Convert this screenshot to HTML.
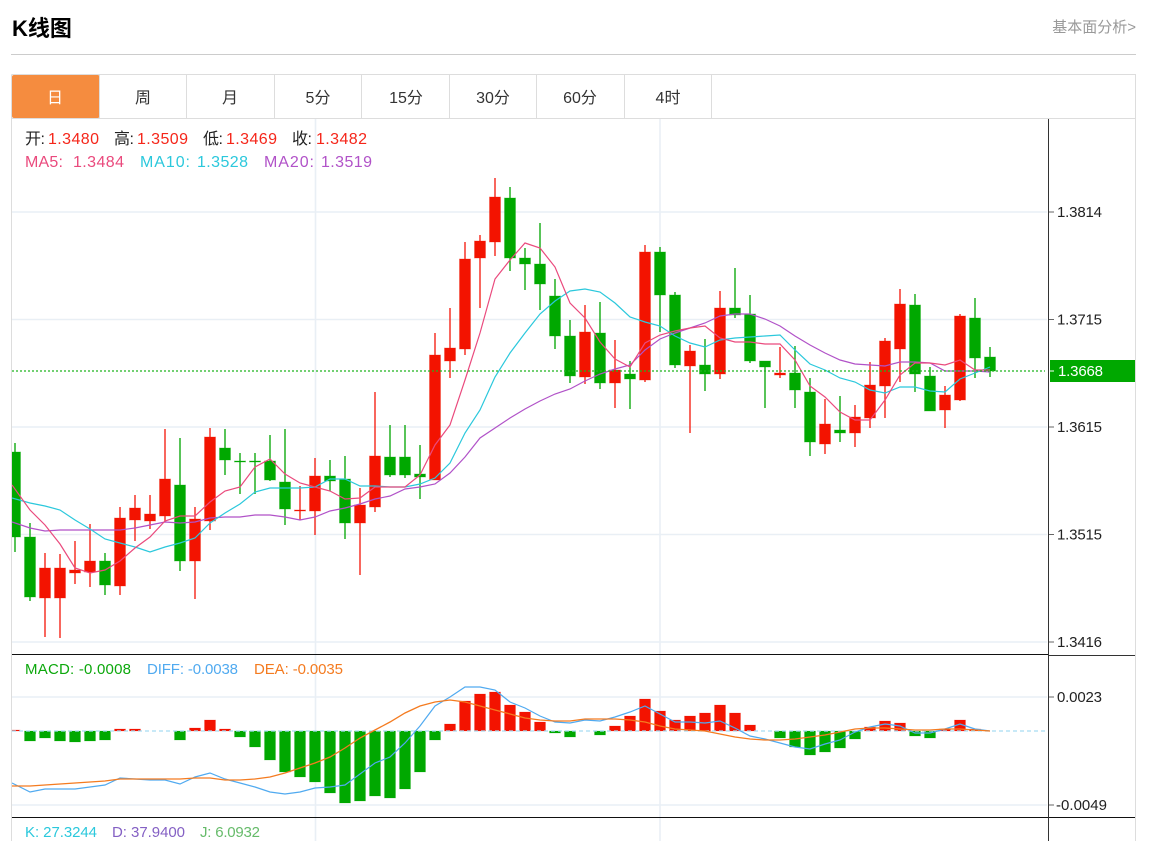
<!DOCTYPE html>
<html lang="zh">
<head>
<meta charset="utf-8">
<title>K线图</title>
<style>
html,body{margin:0;padding:0;background:#fff;width:1163px;height:841px;overflow:hidden}
svg{display:block;font-family:"Liberation Sans","Noto Sans CJK SC",sans-serif}
</style>
</head>
<body>
<svg width="1163" height="841" viewBox="0 0 1163 841" xmlns="http://www.w3.org/2000/svg">
<defs><clipPath id="c"><rect x="12" y="119" width="1037" height="722"/></clipPath></defs>
<text x="12" y="36" font-size="22" font-weight="bold" fill="#000">K线图</text>
<text x="1136" y="32" font-size="15" fill="#999" text-anchor="end">基本面分析&gt;</text>
<path d="M11 54.500H1136" stroke="#ccc" fill="none"/>
<path d="M11.500 74.500H1135.500V841M11.500 74.500V841M11 118.500H1136" stroke="#ddd" fill="none"/>
<rect x="12" y="75" width="87.500" height="43" rx="2" fill="#f58c3f"/>
<path d="M99.500 75V118M186.500 75V118M274.500 75V118M361.500 75V118M449.500 75V118M536.500 75V118M624.500 75V118M711.500 75V118" stroke="#ddd" fill="none"/>
<g font-size="16" fill="#333" text-anchor="middle">
<text x="55" y="103" fill="#fff">日</text>
<text x="143" y="103">周</text>
<text x="230" y="103">月</text>
<text x="318" y="103">5分</text>
<text x="406" y="103">15分</text>
<text x="493" y="103">30分</text>
<text x="580" y="103">60分</text>
<text x="668" y="103">4时</text>
</g>
<!-- grid -->
<g clip-path="url(#c)">
<path d="M12 212H1047M12 319.500H1047M12 427H1047M12 534.500H1047M12 642H1047M12 697H1047M12 805H1047" stroke="#e9eff5" stroke-width="1.600" fill="none"/>
<path d="M315.500 119V841M660 119V841" stroke="#e9eff5" stroke-width="1.600" fill="none"/>
<!-- green candles -->
<g fill="none" stroke="#12ab12" stroke-width="1.400">
<path d="M15 443V552M30 523V601M105 553V595M180 438V571M225 429V475M240 453V494M255 453V494M270 435V481M285 429V525M330 460V491M345 456V539M390 425V477M405 425V478M420 445V499M510 187V271M525 248V290M540 223V310M555 279V349M570 320V383M600 302V389M630 361V409M660 247V332M675 292V368M705 339V391M735 268V318M750 295V363M765 361V408M795 346V408M810 378V456M840 396V442M915 294V392M930 367V411M975 298V378M990 347V377"/>
</g>
<g fill="#00a800" stroke="#00a800" stroke-opacity=".3" stroke-width="1">
<path d="M12 452h8.500v85h-8.500zM24.500 537h11v60h-11zM99.500 561h11v24h-11zM174.500 485h11v76h-11zM219.500 448h11v12h-11zM234.500 461h11v1h-11zM249.500 461h11v1h-11zM264.500 461h11v19h-11zM279.500 482h11v27h-11zM324.500 476h11v5h-11zM339.500 479h11v44h-11zM384.500 457h11v18h-11zM399.500 457h11v18h-11zM414.500 474h11v3h-11zM504.500 198h11v60h-11zM519.500 258h11v6h-11zM534.500 264h11v20h-11zM549.500 296h11v40h-11zM564.500 336h11v40h-11zM594.500 333h11v50h-11zM624.500 374h11v5h-11zM654.500 252h11v43h-11zM669.500 295h11v70h-11zM699.500 365h11v9h-11zM729.500 308h11v7h-11zM744.500 314h11v47h-11zM759.500 361h11v6h-11zM789.500 373h11v17h-11zM804.500 392h11v50h-11zM834.500 430h11v3h-11zM909.500 305h11v69h-11zM924.500 376h11v35h-11zM969.500 318h11v40h-11zM984.500 357h11v14h-11z"/>
</g>
<!-- red candles -->
<g fill="none" stroke="#f5261a" stroke-width="1.400">
<path d="M45 553V637M60 554V638M75 541V584M90 524V587M120 507V595M135 495V541M150 495V529M165 429V522M195 507V599M210 428V530M300 486V520M315 458V535M360 488V575M375 392V512M435 333V480M450 308V378M465 242V355M480 235V308M495 178V256M585 305V384M615 340V408M645 245V382M690 345V433M720 291V379M780 347V378M825 399V454M855 405V447M870 362V428M885 338V418M900 289V382M945 386V428M960 314V401"/>
</g>
<g fill="#f31300" stroke="#f31300" stroke-opacity=".3" stroke-width="1">
<path d="M39.500 568h11v30h-11zM54.500 568h11v30h-11zM69.500 570h11v3h-11zM84.500 561h11v11h-11zM114.500 518h11v68h-11zM129.500 508h11v12h-11zM144.500 514h11v7h-11zM159.500 479h11v37h-11zM189.500 519h11v42h-11zM204.500 437h11v84h-11zM294.500 510h11v1h-11zM309.500 476h11v35h-11zM354.500 505h11v18h-11zM369.500 456h11v51h-11zM429.500 355h11v125h-11zM444.500 348h11v13h-11zM459.500 259h11v90h-11zM474.500 241h11v17h-11zM489.500 197h11v45h-11zM579.500 332h11v45h-11zM609.500 370h11v13h-11zM639.500 252h11v128h-11zM684.500 351h11v15h-11zM714.500 308h11v66h-11zM774.500 373h11v2h-11zM819.500 424h11v20h-11zM849.500 417h11v16h-11zM864.500 385h11v33h-11zM879.500 341h11v45h-11zM894.500 304h11v45h-11zM939.500 395h11v15h-11zM954.500 316h11v84h-11z"/>
</g>
<!-- MA lines -->
<path fill="none" stroke="#b152c8" stroke-width="1.200" d="M12 522L30 528 45 531 60 530 75 530 90 530 105 530 120 530 135 528 150 525 165 522 180 523 195 522 210 518 225 517 240 517 255 515 270 515 285 517 300 520 315 517 330 511 345 508 360 504 375 499 390 496 405 489 420 487 435 484 450 473 465 457 480 438 495 428 510 418 525 409 540 401 555 394 570 389 585 381 600 374 615 369 630 365 645 350 660 339 675 333 690 328 705 323 720 316 735 314 750 314 765 319 780 326 795 336 810 345 825 353 840 360 855 364 870 365 885 366 900 362 915 362 930 363 945 371 960 371 975 371 990 372"/>
<path fill="none" stroke="#2bc8dc" stroke-width="1.200" d="M12 498L30 503 45 506 60 510 75 520 90 529 105 539 120 543 135 547 150 552 165 547 180 543 195 538 210 523 225 513 240 504 255 492 270 488 285 488 300 488 315 487 330 479 345 479 360 486 375 486 390 487 405 487 420 484 435 478 450 463 465 433 480 410 495 377 510 353 525 333 540 314 555 301 570 291 585 289 600 292 615 303 630 317 645 322 660 326 675 336 690 343 705 347 720 340 735 338 750 337 765 336 780 335 795 350 810 364 825 370 840 378 855 382 870 390 885 393 900 387 915 387 930 391 945 392 960 379 975 373 990 367"/>
<path fill="none" stroke="#ea4a7d" stroke-width="1.200" d="M12 485L30 510 45 525 60 544 75 568 90 573 105 570 120 561 135 548 150 537 165 521 180 516 195 516 210 502 225 491 240 487 255 467 270 459 285 474 300 483 315 487 330 491 345 499 360 498 375 487 390 487 405 487 420 475 435 445 450 425 465 380 480 333 495 279 510 260 525 243 540 248 555 267 570 303 585 318 600 342 615 359 630 367 645 343 660 335 675 331 690 328 705 326 720 338 735 342 750 342 765 344 780 344 795 360 810 386 825 397 840 412 855 420 870 420 885 400 900 375 915 363 930 363 945 365 960 360 975 370 990 370"/>
<path d="M12 371H1045" stroke="#1fb51f" stroke-width="1.300" stroke-dasharray="2 2" fill="none"/>
<!-- MACD bars -->
<g fill="#00a800" stroke="#00a800" stroke-opacity=".25" stroke-width=".8">
<path d="M24.500 731h11v10h-11zM39.500 731h11v7h-11zM54.500 731h11v10h-11zM69.500 731h11v11h-11zM84.500 731h11v10h-11zM99.500 731h11v9h-11zM174.500 731h11v9h-11zM234.500 731h11v6h-11zM249.500 731h11v16h-11zM264.500 731h11v29h-11zM279.500 731h11v41h-11zM294.500 731h11v46h-11zM309.500 731h11v51h-11zM324.500 731h11v62h-11zM339.500 731h11v72h-11zM354.500 731h11v70h-11zM369.500 731h11v65h-11zM384.500 731h11v67h-11zM399.500 731h11v58h-11zM414.500 731h11v41h-11zM429.500 731h11v9h-11zM549.500 731h11v2h-11zM564.500 731h11v6h-11zM594.500 731h11v4h-11zM774.500 731h11v7h-11zM789.500 731h11v16h-11zM804.500 731h11v24h-11zM819.500 731h11v21h-11zM834.500 731h11v17h-11zM849.500 731h11v8h-11zM909.500 731h11v5h-11zM924.500 731h11v7h-11z"/>
</g>
<g fill="#f31300" stroke="#f31300" stroke-opacity=".25" stroke-width=".8">
<path d="M12 730h8v1h-8zM114.500 729h11v2h-11zM129.500 729h11v2h-11zM189.500 728h11v3h-11zM204.500 720h11v11h-11zM219.500 729h11v2h-11zM444.500 724h11v7h-11zM459.500 701h11v30h-11zM474.500 694h11v37h-11zM489.500 692h11v39h-11zM504.500 705h11v26h-11zM519.500 712h11v19h-11zM534.500 722h11v9h-11zM609.500 726h11v5h-11zM624.500 716h11v15h-11zM639.500 699h11v32h-11zM654.500 711h11v20h-11zM669.500 720h11v11h-11zM684.500 716h11v15h-11zM699.500 713h11v18h-11zM714.500 705h11v26h-11zM729.500 713h11v18h-11zM744.500 725h11v6h-11zM864.500 727h11v4h-11zM879.500 721h11v10h-11zM894.500 723h11v8h-11zM939.500 729h11v2h-11zM954.500 720h11v11h-11zM969.500 729h11v2h-11z"/>
</g>
<path d="M12 731H1045" stroke="#a8dcf2" stroke-width="1.200" stroke-dasharray="4 3" fill="none"/>
<path fill="none" stroke="#50aaf0" stroke-width="1.200" d="M12 783L30 792 45 789 60 789 75 789 90 787 105 785 120 778 135 779 150 780 165 780 180 784 195 777 210 773 225 779 240 783 255 787 270 792 285 794 300 792 315 788 330 787 345 785 360 774 375 763 390 757 405 743 420 726 435 706 450 697 465 687 480 687 495 690 510 702 525 708 540 716 555 722 570 723 585 720 600 721 615 717 630 712 645 706 660 714 675 722 690 722 705 723 720 721 735 728 750 736 765 739 780 743 795 747 810 749 825 744 840 740 855 732 870 727 885 724 900 726 915 733 930 733 945 729 960 724 975 729 990 731"/>
<path fill="none" stroke="#f47b20" stroke-width="1.300" d="M12 786L30 786 45 785 60 784 75 783 90 782 105 781 120 779 135 779 150 779 165 779 180 779 195 778 210 778 225 780 240 780 255 779 270 777 285 773 300 768 315 763 330 757 345 748 360 738 375 730 390 722 405 713 420 706 435 702 450 700 465 702 480 706 495 710 510 714 525 718 540 720 555 721 570 721 585 719 600 719 615 719 630 720 645 722 660 726 675 729 690 730 705 731 720 734 735 737 750 739 765 740 780 740 795 739 810 737 825 735 840 732 855 729 870 728 885 728 900 729 915 730 930 730 945 729 960 729 975 730 990 731"/>
</g>
<!-- frame lines -->
<path d="M12 654.500H1048.500M12 817.500H1135" stroke="#111" stroke-width="1" fill="none"/>
<path d="M1048.500 119V841M1048 655.500H1135" stroke="#333" stroke-width="1" fill="none"/>
<path d="M1049 212H1054M1049 319.500H1054M1049 427H1054M1049 534.500H1054M1049 642H1054M1049 697H1054M1049 805H1054" stroke="#666" stroke-width="1" fill="none"/>
<!-- axis labels -->
<g font-size="15" fill="#222">
<text x="1057" y="217" textLength="45" lengthAdjust="spacing">1.3814</text>
<text x="1057" y="324.500" textLength="45" lengthAdjust="spacing">1.3715</text>
<text x="1057" y="432" textLength="45" lengthAdjust="spacing">1.3615</text>
<text x="1057" y="539.500" textLength="45" lengthAdjust="spacing">1.3515</text>
<text x="1057" y="647" textLength="45" lengthAdjust="spacing">1.3416</text>
<text x="1057" y="702" textLength="45" lengthAdjust="spacing">0.0023</text>
<text x="1056" y="810" textLength="51" lengthAdjust="spacing">-0.0049</text>
</g>
<rect x="1050" y="360" width="85" height="22" fill="#00a800"/>
<path d="M1050 371H1054" stroke="#fff" fill="none"/>
<text x="1058" y="376" font-size="15" fill="#fff" textLength="45" lengthAdjust="spacing">1.3668</text>
<!-- legends -->
<g font-size="16">
<text x="25" y="144" fill="#222" textLength="20" lengthAdjust="spacing">开:</text>
<text x="48" y="144" fill="#f5261a" textLength="51" lengthAdjust="spacing">1.3480</text>
<text x="114" y="144" fill="#222" textLength="20" lengthAdjust="spacing">高:</text>
<text x="137" y="144" fill="#f5261a" textLength="51" lengthAdjust="spacing">1.3509</text>
<text x="203" y="144" fill="#222" textLength="20" lengthAdjust="spacing">低:</text>
<text x="226" y="144" fill="#f5261a" textLength="51" lengthAdjust="spacing">1.3469</text>
<text x="292" y="144" fill="#222" textLength="20" lengthAdjust="spacing">收:</text>
<text x="316" y="144" fill="#f5261a" textLength="51" lengthAdjust="spacing">1.3482</text>
<g fill="#ea4a7d">
<text x="25" y="167" textLength="38" lengthAdjust="spacing">MA5:</text>
<text x="73" y="167" textLength="51" lengthAdjust="spacing">1.3484</text>
</g>
<g fill="#2bc8dc">
<text x="140" y="167" textLength="50" lengthAdjust="spacing">MA10:</text>
<text x="197" y="167" textLength="51" lengthAdjust="spacing">1.3528</text>
</g>
<g fill="#b152c8">
<text x="264" y="167" textLength="50" lengthAdjust="spacing">MA20:</text>
<text x="321" y="167" textLength="51" lengthAdjust="spacing">1.3519</text>
</g>
</g>
<g font-size="15">
<text x="25" y="674" fill="#0ca80c" textLength="106" lengthAdjust="spacing">MACD: -0.0008</text>
<text x="147" y="674" fill="#50aaf0" textLength="91" lengthAdjust="spacing">DIFF: -0.0038</text>
<text x="254" y="674" fill="#f47b20" textLength="89" lengthAdjust="spacing">DEA: -0.0035</text>
<text x="25" y="837" fill="#2bc8dc" textLength="72" lengthAdjust="spacing">K: 27.3244</text>
<text x="112" y="837" fill="#8460c4" textLength="73" lengthAdjust="spacing">D: 37.9400</text>
<text x="200" y="837" fill="#66bb6a" textLength="60" lengthAdjust="spacing">J: 6.0932</text>
</g>
</svg>
</body>
</html>
